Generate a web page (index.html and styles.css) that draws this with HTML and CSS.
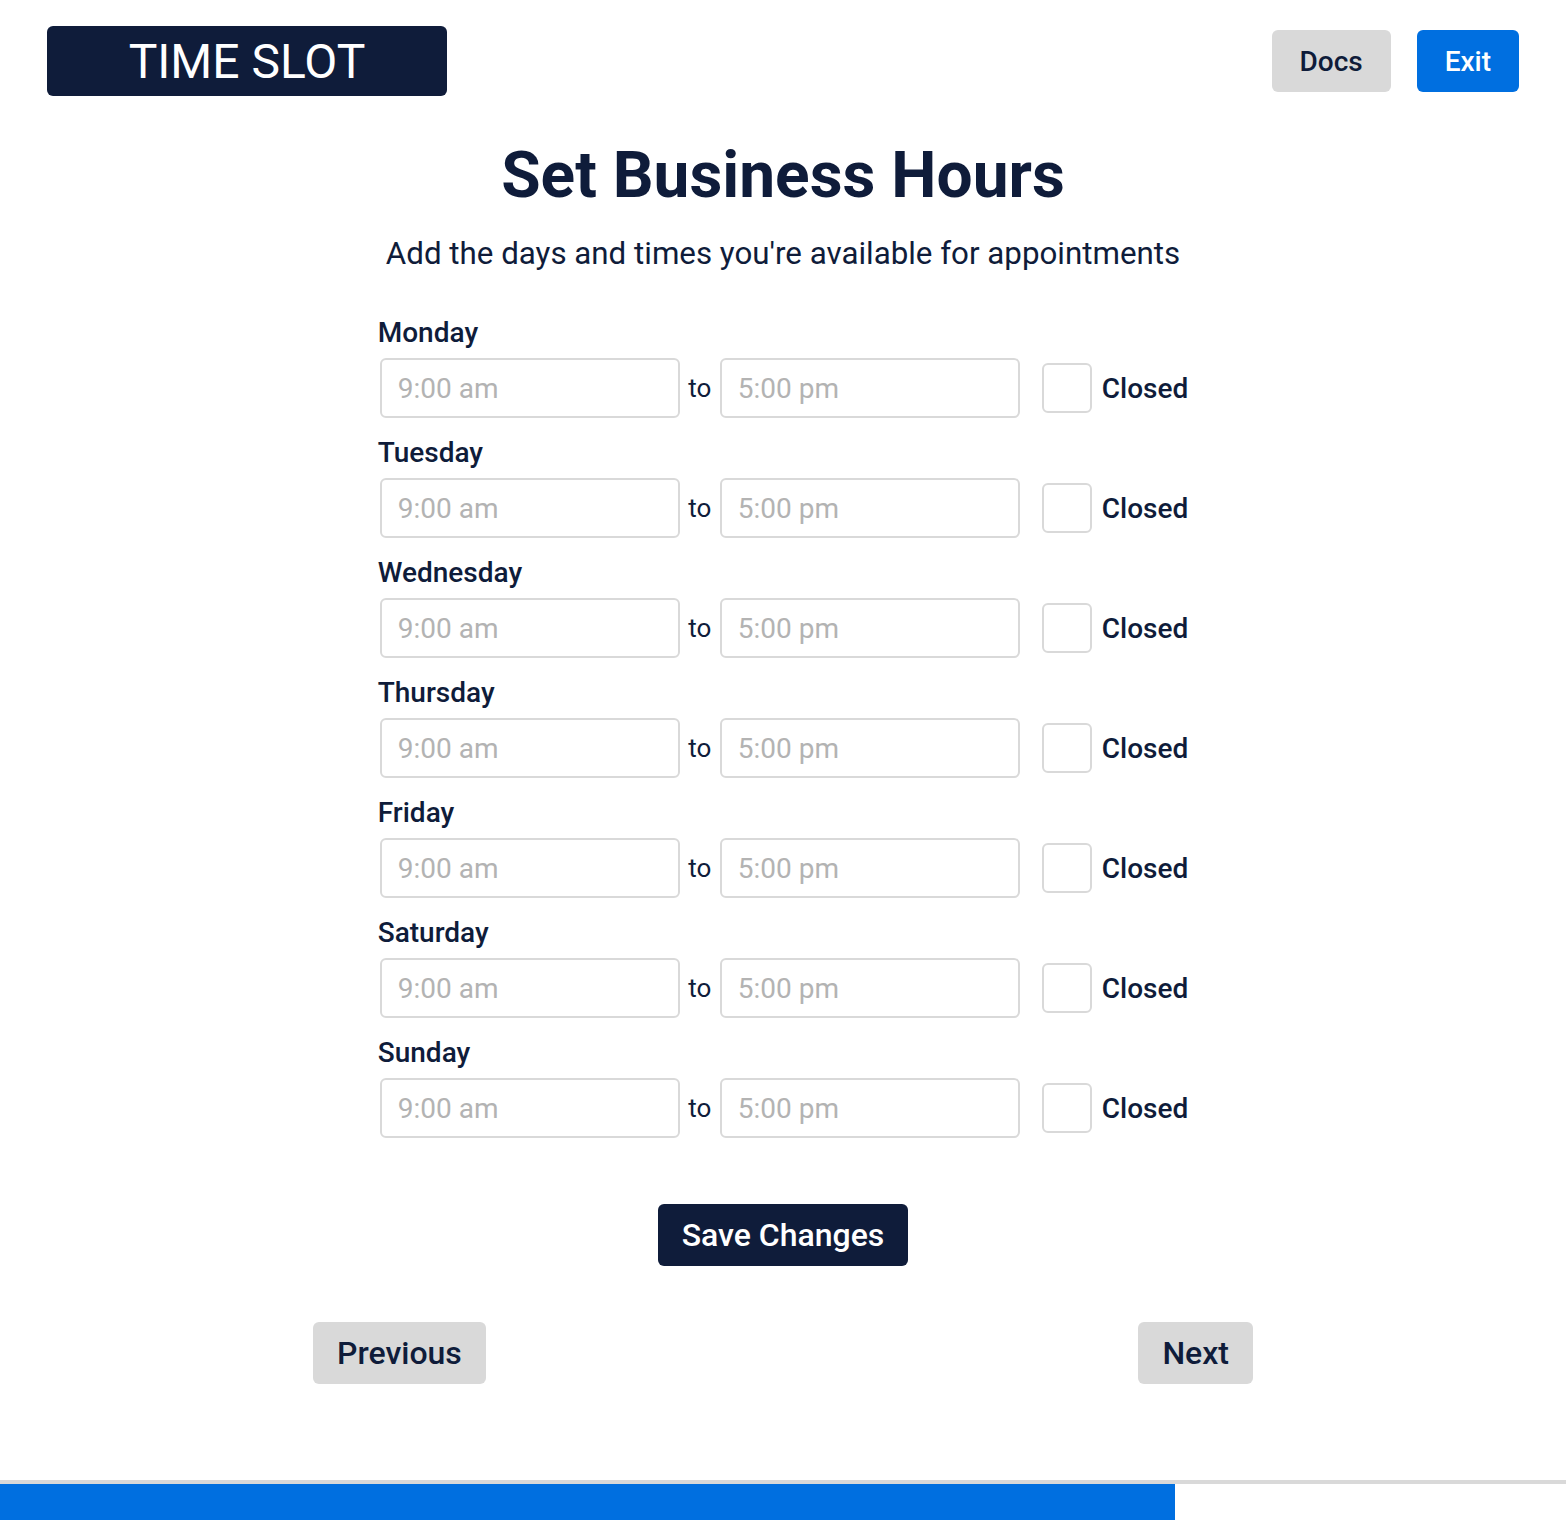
FILE: index.html
```html
<!DOCTYPE html>
<html lang="en">
<head>
<meta charset="utf-8">
<title>Time Slot - Set Business Hours</title>
<link rel="stylesheet" href="styles.css">
</head>
<body>
<header class="topbar">
  <div class="logo">TIME SLOT</div>
  <nav class="top-actions">
    <button class="btn btn-grey btn-docs">Docs</button>
    <button class="btn btn-blue">Exit</button>
  </nav>
</header>
<main class="main">
  <h1 class="title">Set Business Hours</h1>
  <p class="subtitle">Add the days and times you're available for appointments</p>
  <form class="hours">
    <div class="day">
      <label class="day-name">Monday</label>
      <div class="row"><input class="time" placeholder="9:00 am"><span class="to">to</span><input class="time" placeholder="5:00 pm"><span class="check"></span><span class="closed">Closed</span></div>
    </div>
    <div class="day">
      <label class="day-name">Tuesday</label>
      <div class="row"><input class="time" placeholder="9:00 am"><span class="to">to</span><input class="time" placeholder="5:00 pm"><span class="check"></span><span class="closed">Closed</span></div>
    </div>
    <div class="day">
      <label class="day-name">Wednesday</label>
      <div class="row"><input class="time" placeholder="9:00 am"><span class="to">to</span><input class="time" placeholder="5:00 pm"><span class="check"></span><span class="closed">Closed</span></div>
    </div>
    <div class="day">
      <label class="day-name">Thursday</label>
      <div class="row"><input class="time" placeholder="9:00 am"><span class="to">to</span><input class="time" placeholder="5:00 pm"><span class="check"></span><span class="closed">Closed</span></div>
    </div>
    <div class="day">
      <label class="day-name">Friday</label>
      <div class="row"><input class="time" placeholder="9:00 am"><span class="to">to</span><input class="time" placeholder="5:00 pm"><span class="check"></span><span class="closed">Closed</span></div>
    </div>
    <div class="day">
      <label class="day-name">Saturday</label>
      <div class="row"><input class="time" placeholder="9:00 am"><span class="to">to</span><input class="time" placeholder="5:00 pm"><span class="check"></span><span class="closed">Closed</span></div>
    </div>
    <div class="day">
      <label class="day-name">Sunday</label>
      <div class="row"><input class="time" placeholder="9:00 am"><span class="to">to</span><input class="time" placeholder="5:00 pm"><span class="check"></span><span class="closed">Closed</span></div>
    </div>
  </form>
  <div class="save-wrap"><button class="btn btn-dark">Save Changes</button></div>
  <div class="pager">
    <button class="btn btn-grey btn-lg">Previous</button>
    <button class="btn btn-grey btn-lg">Next</button>
  </div>
</main>
<div class="progress"><div class="progress-fill" style="width:75%"></div></div>
</body>
</html>
```
FILE: styles.css
```css
* { box-sizing: border-box; }
html, body { margin: 0; padding: 0; }
body {
  font-family: Roboto, "Noto Sans", sans-serif;
  color: #0f1c3a;
  background: #fff;
  width: 1566px;
  height: 1520px;
  position: relative;
  overflow: hidden;
}
.topbar {
  display: flex;
  justify-content: space-between;
  align-items: flex-start;
  padding: 26px 47px 0 47px;
}
.logo {
  width: 400px;
  height: 70px;
  background: #0f1c3a;
  color: #fff;
  border-radius: 6px;
  font-size: 48px;
  font-weight: 400;
  display: flex;
  align-items: center;
  justify-content: center;
}
.top-actions {
  display: flex;
  gap: 26px;
  margin-top: 4px;
}
.btn {
  font-family: Roboto, "Noto Sans", sans-serif;
  border: none;
  border-radius: 6px;
  height: 62px;
  font-weight: 500;
  font-size: 28px;
  padding: 0 28px;
  cursor: pointer;
}
.btn-docs { width: 119px; padding: 0; }
.btn-grey { background: #d9d9d9; color: #0f1c3a; }
.btn-blue { background: #006fe0; color: #fff; }
.btn-dark { background: #0f1c3a; color: #fff; font-size: 32px; padding: 0 20px; width: 250px; }
.btn-lg { font-size: 32px; padding: 0 24px; }
.main {
  display: flex;
  flex-direction: column;
  align-items: center;
}
.title {
  margin: 40px 0 0 0;
  font-size: 64px;
  font-weight: 700;
  line-height: 80px;
}
.subtitle {
  margin: 18px 0 0 0;
  font-size: 31.3px;
  line-height: 40px;
}
.hours {
  margin-top: 44px;
  margin-left: 2px;
  display: flex;
  flex-direction: column;
}
.day-name {
  display: block;
  font-size: 28px;
  font-weight: 500;
  line-height: 30px;
  margin-left: -2px;
  margin-bottom: 10px;
}
.row {
  display: flex;
  align-items: center;
  height: 60px;
  margin-bottom: 20px;
}
.time {
  width: 300px;
  height: 60px;
  border: 2px solid #d9d9d9;
  border-radius: 6px;
  padding: 0 16px;
  font-family: Roboto, "Noto Sans", sans-serif;
  font-size: 28px;
  color: #0f1c3a;
  outline: none;
}
.time::placeholder { color: #b3b3b3; }
.to {
  font-size: 26px;
  width: 40px;
  text-align: center;
}
.check {
  width: 50px;
  height: 50px;
  border: 2px solid #d9d9d9;
  border-radius: 6px;
  margin-left: 22px;
  margin-right: 10px;
}
.closed {
  font-size: 28px;
  font-weight: 500;
}
.save-wrap {
  margin-top: 46px;
}
.pager {
  width: 940px;
  display: flex;
  justify-content: space-between;
  margin-top: 56px;
}
.progress {
  position: absolute;
  left: 0;
  right: 0;
  bottom: 0;
  height: 40px;
  border-top: 4px solid #d9d9d9;
}
.progress-fill {
  height: 36px;
  background: #006fe0;
}
```
